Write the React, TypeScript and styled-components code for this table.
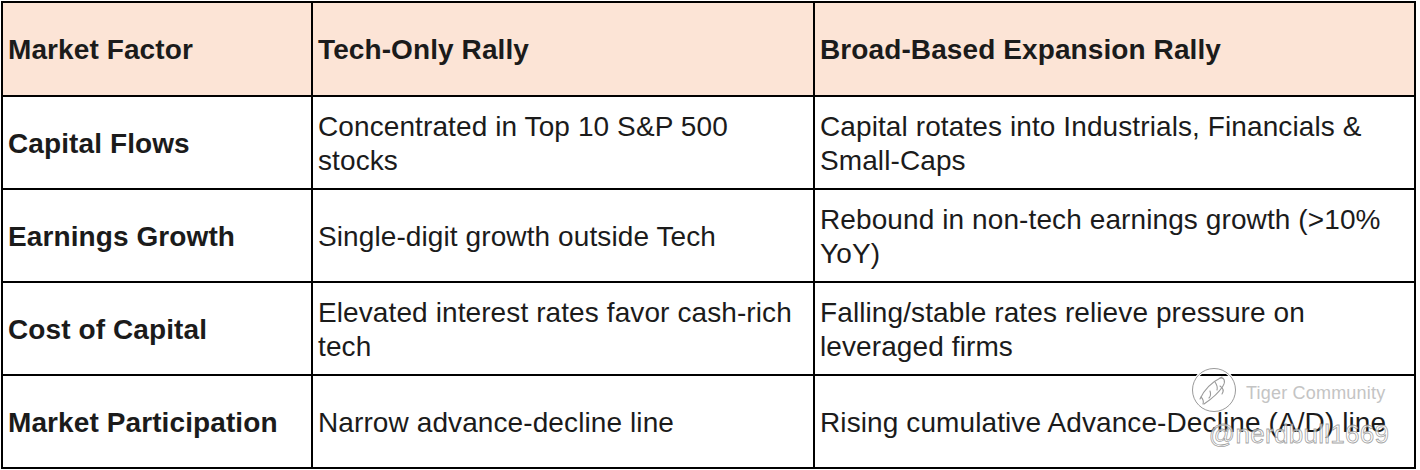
import React from 'react';
import styled, {createGlobalStyle} from "styled-components";

const GlobalStyle = createGlobalStyle`
    html, body {
        margin: 0;
        padding: 0;
        background: #ffffff;
    }
    body {
        font-family: "Liberation Sans", Arial, sans-serif;
        color: #1b1b1b;
    }
`

type Row = {
    factor: string;
    tech: string;
    broad: string;
}

const rows: Row[] = [
    {
        factor: "Capital Flows",
        tech: "Concentrated in Top 10 S&P 500 stocks",
        broad: "Capital rotates into Industrials, Financials & Small-Caps",
    },
    {
        factor: "Earnings Growth",
        tech: "Single-digit growth outside Tech",
        broad: "Rebound in non-tech earnings growth (>10% YoY)",
    },
    {
        factor: "Cost of Capital",
        tech: "Elevated interest rates favor cash-rich tech",
        broad: "Falling/stable rates relieve pressure on leveraged firms",
    },
    {
        factor: "Market Participation",
        tech: "Narrow advance-decline line",
        broad: "Rising cumulative Advance-Decline (A/D) line",
    },
];

const App = () => {
    return (
        <Page>
            <GlobalStyle/>
            <Table>
                <Cell header>Market Factor</Cell>
                <Cell header>Tech-Only Rally</Cell>
                <Cell header>Broad-Based Expansion Rally</Cell>
                {rows.map((row) => (
                    <React.Fragment key={row.factor}>
                        <Cell bold>{row.factor}</Cell>
                        <Cell>{row.tech}</Cell>
                        <Cell>{row.broad}</Cell>
                    </React.Fragment>
                ))}
            </Table>

            <Watermark>
                <WatermarkTop>
                    <TigerLogo/>
                    <Brand>Tiger Community</Brand>
                </WatermarkTop>
                <Handle>@nerdbull1669</Handle>
            </Watermark>
        </Page>
    );
};

const TigerLogo = () => (
    <svg width="50" height="48" viewBox="0 0 50 48" fill="none">
        <circle cx="24" cy="24" r="21.5" stroke="#fff" strokeWidth="3"/>
        <circle cx="24" cy="24" r="21.5" stroke="#9a9a9a" strokeWidth="1"/>
        <g stroke="#9a9a9a" strokeWidth="1.1" strokeLinecap="round">
            <path d="M10 33 C14 24 22 16 32 11"/>
            <path d="M14 38 C20 34 28 28 33 20 C36 15 34 11 30 12"/>
            <path d="M25 16 C27 19 28 21 27 24"/>
            <path d="M20 25 C21 28 21 30 19 32"/>
            <path d="M11 31 C13 33 14 35 13 38"/>
            <path d="M30 20 C33 22 34 25 32 28"/>
        </g>
    </svg>
);

const Page = styled.div`
    position: relative;
    width: 1420px;
    height: 470px;
    overflow: hidden;
`

const Table = styled.div`
    display: grid;
    grid-template-columns: 310px 502px 601px;
    grid-template-rows: 94px repeat(4, 93px);
    margin: 1px 0 0 1px;
    width: fit-content;
    border-left: 2px solid #000;
    border-top: 2px solid #000;
`

const Cell = styled.div<{ header?: boolean; bold?: boolean }>`
    display: flex;
    align-items: center;
    padding: 2px 6px 0 5px;
    border-right: 2px solid #000;
    border-bottom: 2px solid #000;
    background: ${({header}) => header ? "#fce4d6" : "#ffffff"};
    font-size: 28px;
    line-height: 34px;
    letter-spacing: 0.1px;
    font-weight: ${({header, bold}) => header || bold ? 700 : 400};
    color: #1b1b1b;
`

const Watermark = styled.div`
    position: absolute;
    left: 1190px;
    top: 366px;
    display: flex;
    flex-direction: column;
    align-items: flex-end;
    pointer-events: none;
`

const WatermarkTop = styled.div`
    display: flex;
    align-items: center;
    gap: 6px;
`

const Brand = styled.span`
    font-family: "Liberation Sans", Arial, sans-serif;
    font-size: 18px;
    color: #c4c4c4;
    letter-spacing: 0.2px;
    text-shadow: 0 0 2px #fff, 0 0 2px #fff;
    margin-top: 6px;
`

const Handle = styled.span`
    font-family: "Liberation Sans", Arial, sans-serif;
    font-size: 26px;
    line-height: 28px;
    color: rgba(255, 255, 255, 0.7);
    -webkit-text-stroke: 0.8px rgba(130, 130, 130, 0.75);
    margin-top: 6px;
    margin-right: -4px;
    letter-spacing: 0.3px;
`

export default App;
